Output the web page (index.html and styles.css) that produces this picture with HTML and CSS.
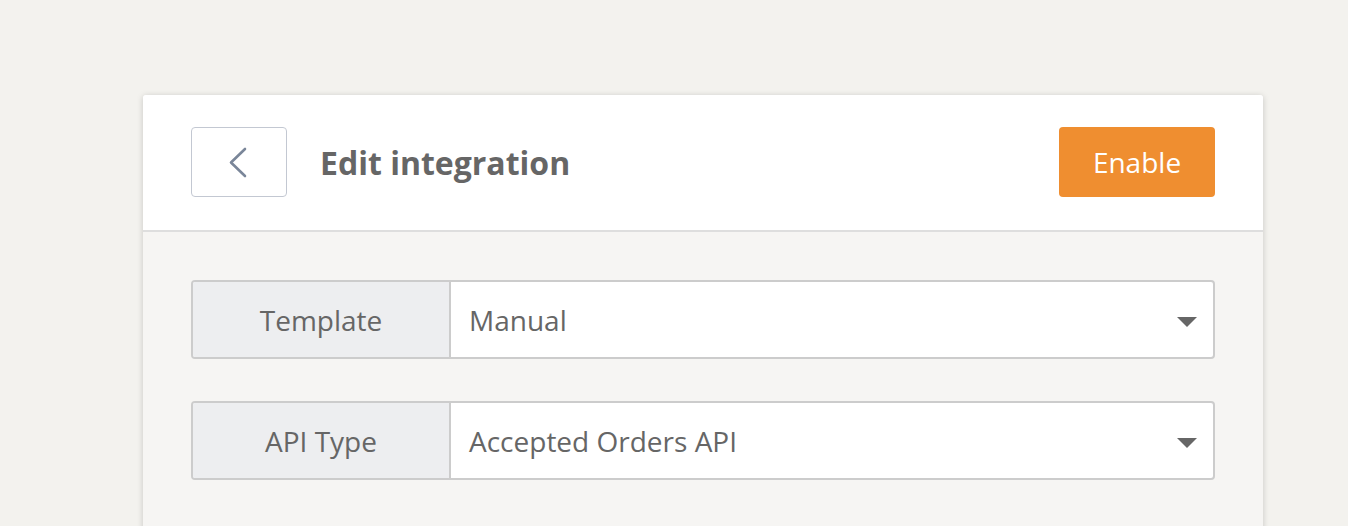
FILE: index.html
```html
<!DOCTYPE html>
<html>
<head>
<meta charset="utf-8">
<link rel="stylesheet" href="styles.css">
</head>
<body>
<div class="page">
  <div class="card">
    <div class="card-header">
      <button class="back-btn" type="button" aria-label="Back">
        <svg width="22" height="32" viewBox="0 0 22 32"><path d="M18 3 L4 16.5 L18 30" fill="none" stroke="#7a8699" stroke-width="2.6" stroke-linecap="round" stroke-linejoin="round"/></svg>
      </button>
      <h1 class="title">Edit integration</h1>
      <button class="enable-btn" type="button">Enable</button>
    </div>
    <div class="card-body">
      <div class="field">
        <div class="field-label">Template</div>
        <div class="field-select">
          <span>Manual</span>
          <span class="caret"></span>
        </div>
      </div>
      <div class="field">
        <div class="field-label">API Type</div>
        <div class="field-select">
          <span>Accepted Orders API</span>
          <span class="caret"></span>
        </div>
      </div>
    </div>
  </div>
</div>
</body>
</html>
```

FILE: styles.css
```css
html, body {
  margin: 0;
  padding: 0;
  background: #f3f2ee;
  font-family: "Open Sans", "Liberation Sans", sans-serif;
  overflow: hidden;
  height: 526px;
}
.page {
  padding: 95px 85px 0 143px;
  height: 526px;
  box-sizing: border-box;
  overflow: hidden;
}
.card {
  width: 1120px;
  height: 460px;
  background: #f6f5f3;
  border-radius: 3px;
  box-shadow: 0 1px 6px rgba(0,0,0,0.18);
  overflow: hidden;
}
.card-header {
  background: #fff;
  display: flex;
  align-items: center;
  padding: 32px 48px 33px 48px;
  border-bottom: 2px solid #dedede;
}
.back-btn {
  width: 96px;
  height: 70px;
  border: 1.5px solid #c3c8d2;
  border-radius: 4px;
  background: #fff;
  display: flex;
  align-items: center;
  justify-content: center;
  padding: 0 2px 0 0;
  box-sizing: border-box;
}
.title {
  margin: 0 0 0 33px;
  font-size: 32px;
  font-weight: 700;
  color: #666;
  flex: 1;
  line-height: 1.2;
  padding-top: 2px;
}
.enable-btn {
  width: 156px;
  height: 70px;
  background: #ef8e30;
  border: none;
  border-radius: 4px;
  color: #fff;
  font-family: inherit;
  font-size: 28px;
  padding: 0;
}
.card-body {
  padding: 48px 48px 0 48px;
  display: flex;
  flex-direction: column;
  gap: 42px;
}
.field {
  display: flex;
  height: 79px;
  border: 2px solid #cccccc;
  border-radius: 4px;
  box-sizing: border-box;
  overflow: hidden;
  background: #fff;
}
.field-label {
  width: 256px;
  background: #edeef0;
  border-right: 2px solid #cccccc;
  display: flex;
  align-items: center;
  justify-content: center;
  font-size: 28px;
  color: #666;
  padding-bottom: 0;
}
.field-select {
  flex: 1;
  display: flex;
  align-items: center;
  justify-content: space-between;
  padding: 0 16px 0 18px;
  font-size: 28px;
  color: #666;
}
.caret {
  width: 0;
  height: 0;
  border-left: 10px solid transparent;
  border-right: 10px solid transparent;
  border-top: 10px solid #666;
  margin-top: 4px;
}
```
